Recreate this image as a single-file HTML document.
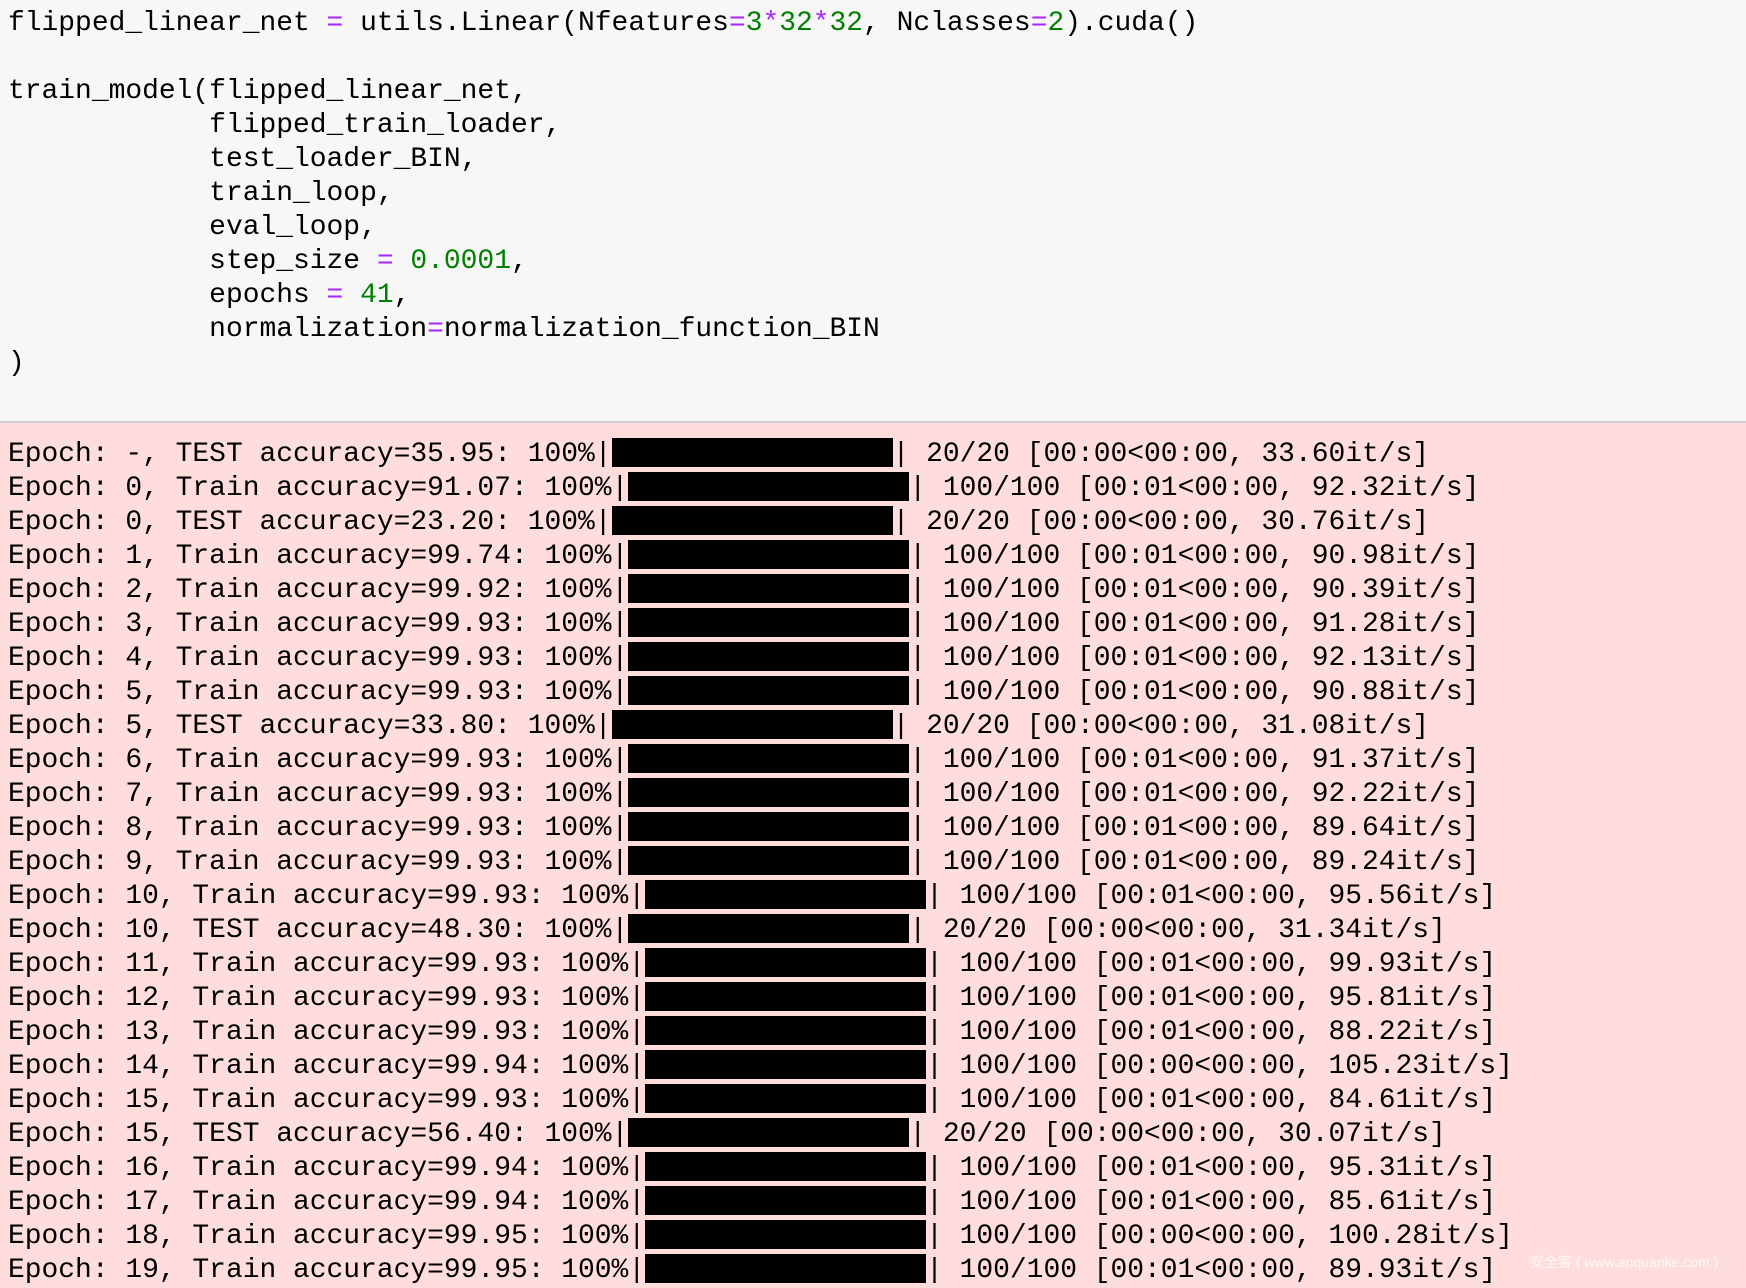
<!DOCTYPE html>
<html><head><meta charset="utf-8"><style>
html,body{margin:0;padding:0;width:1746px;height:1282px;overflow:hidden;background:#ffdddd;}
.code{background:#f7f7f7;height:421px;border-bottom:2px solid #cfcfcf;box-sizing:content-box;padding:0;}
pre{margin:0;font-family:"Liberation Mono",monospace;font-size:27.95px;line-height:34px;color:#000;white-space:pre;}
.code pre{padding:7px 0 0 8px;}
.p{color:#aa22ff;}
.g{color:#008000;}
.out pre{padding:438px 0 0 8px;position:absolute;top:0;left:0;}
.b{display:inline-block;width:281px;height:29px;background:#000;vertical-align:-6px;}
.wm{position:absolute;left:1530px;top:1252px;font-family:"Liberation Sans","Noto Sans CJK SC",sans-serif;font-size:14px;color:#fff;opacity:.8;}
</style></head><body>
<div class="code"><pre>flipped_linear_net <span class="p">=</span> utils.Linear(Nfeatures<span class="p">=</span><span class="g">3</span><span class="p">*</span><span class="g">32</span><span class="p">*</span><span class="g">32</span>, Nclasses<span class="p">=</span><span class="g">2</span>).cuda()

train_model(flipped_linear_net,
            flipped_train_loader,
            test_loader_BIN,
            train_loop,
            eval_loop,
            step_size <span class="p">=</span> <span class="g">0.0001</span>,
            epochs <span class="p">=</span> <span class="g">41</span>,
            normalization<span class="p">=</span>normalization_function_BIN
)</pre></div>
<div class="out"><pre>Epoch: -, TEST accuracy=35.95: 100%|<span class="b"></span>| 20/20 [00:00&lt;00:00, 33.60it/s]
Epoch: 0, Train accuracy=91.07: 100%|<span class="b"></span>| 100/100 [00:01&lt;00:00, 92.32it/s]
Epoch: 0, TEST accuracy=23.20: 100%|<span class="b"></span>| 20/20 [00:00&lt;00:00, 30.76it/s]
Epoch: 1, Train accuracy=99.74: 100%|<span class="b"></span>| 100/100 [00:01&lt;00:00, 90.98it/s]
Epoch: 2, Train accuracy=99.92: 100%|<span class="b"></span>| 100/100 [00:01&lt;00:00, 90.39it/s]
Epoch: 3, Train accuracy=99.93: 100%|<span class="b"></span>| 100/100 [00:01&lt;00:00, 91.28it/s]
Epoch: 4, Train accuracy=99.93: 100%|<span class="b"></span>| 100/100 [00:01&lt;00:00, 92.13it/s]
Epoch: 5, Train accuracy=99.93: 100%|<span class="b"></span>| 100/100 [00:01&lt;00:00, 90.88it/s]
Epoch: 5, TEST accuracy=33.80: 100%|<span class="b"></span>| 20/20 [00:00&lt;00:00, 31.08it/s]
Epoch: 6, Train accuracy=99.93: 100%|<span class="b"></span>| 100/100 [00:01&lt;00:00, 91.37it/s]
Epoch: 7, Train accuracy=99.93: 100%|<span class="b"></span>| 100/100 [00:01&lt;00:00, 92.22it/s]
Epoch: 8, Train accuracy=99.93: 100%|<span class="b"></span>| 100/100 [00:01&lt;00:00, 89.64it/s]
Epoch: 9, Train accuracy=99.93: 100%|<span class="b"></span>| 100/100 [00:01&lt;00:00, 89.24it/s]
Epoch: 10, Train accuracy=99.93: 100%|<span class="b"></span>| 100/100 [00:01&lt;00:00, 95.56it/s]
Epoch: 10, TEST accuracy=48.30: 100%|<span class="b"></span>| 20/20 [00:00&lt;00:00, 31.34it/s]
Epoch: 11, Train accuracy=99.93: 100%|<span class="b"></span>| 100/100 [00:01&lt;00:00, 99.93it/s]
Epoch: 12, Train accuracy=99.93: 100%|<span class="b"></span>| 100/100 [00:01&lt;00:00, 95.81it/s]
Epoch: 13, Train accuracy=99.93: 100%|<span class="b"></span>| 100/100 [00:01&lt;00:00, 88.22it/s]
Epoch: 14, Train accuracy=99.94: 100%|<span class="b"></span>| 100/100 [00:00&lt;00:00, 105.23it/s]
Epoch: 15, Train accuracy=99.93: 100%|<span class="b"></span>| 100/100 [00:01&lt;00:00, 84.61it/s]
Epoch: 15, TEST accuracy=56.40: 100%|<span class="b"></span>| 20/20 [00:00&lt;00:00, 30.07it/s]
Epoch: 16, Train accuracy=99.94: 100%|<span class="b"></span>| 100/100 [00:01&lt;00:00, 95.31it/s]
Epoch: 17, Train accuracy=99.94: 100%|<span class="b"></span>| 100/100 [00:01&lt;00:00, 85.61it/s]
Epoch: 18, Train accuracy=99.95: 100%|<span class="b"></span>| 100/100 [00:00&lt;00:00, 100.28it/s]
Epoch: 19, Train accuracy=99.95: 100%|<span class="b"></span>| 100/100 [00:01&lt;00:00, 89.93it/s]</pre></div>
<div class="wm">安全客 ( www.anquanke.com )</div>
</body></html>
